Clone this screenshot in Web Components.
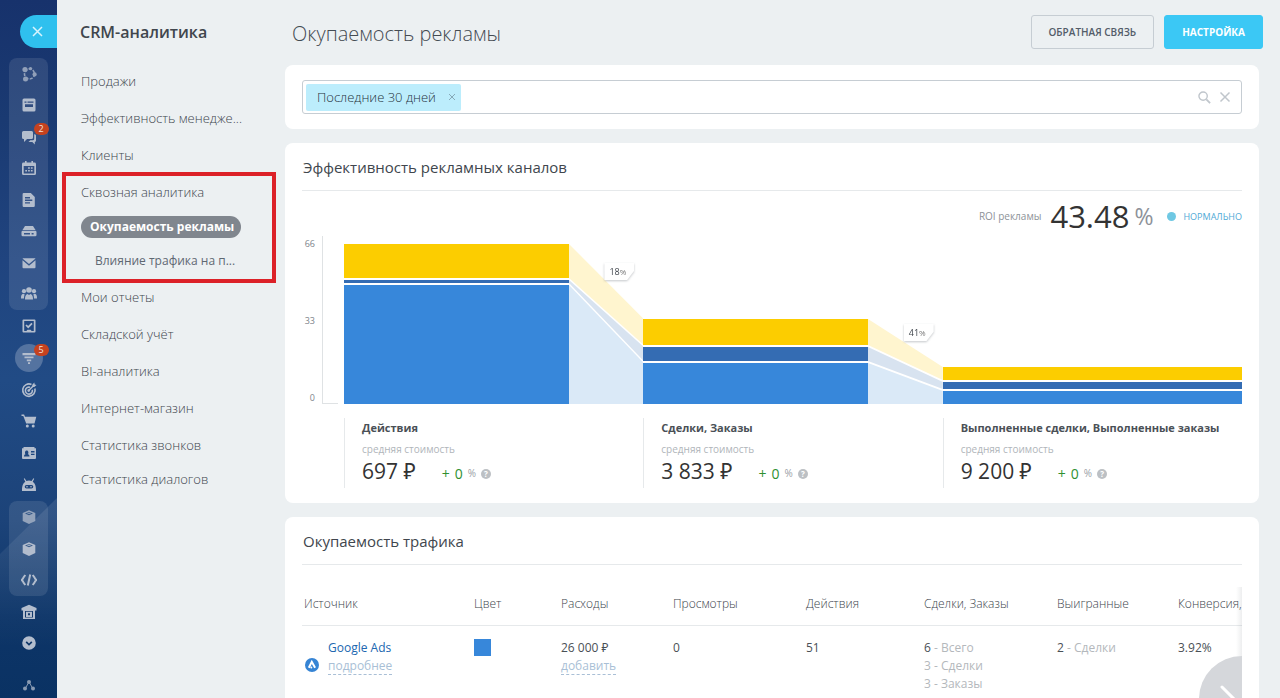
<!DOCTYPE html>
<html lang="ru">
<head>
<meta charset="utf-8">
<meta name="viewport" content="width=device-width, initial-scale=1">
<title>CRM-аналитика</title>
<style>
  html, body { margin: 0; height: 100%; }
  body { font-family: "Open Sans", "Noto Sans", sans-serif; font-size: 13px; color: #535c69; background: #ecf0f2; overflow: hidden; }
</style>
</head>
<body>
<crm-app></crm-app>

<script>
const define = (name, html) => customElements.define(name, class extends HTMLElement {
  connectedCallback() {
    if (this.shadowRoot) return;
    const t = document.createElement('template');
    t.innerHTML = typeof html === 'function' ? html(this) : html;
    this.attachShadow({ mode: 'open' }).append(t.content.cloneNode(true));
  }
});

const ICONS = {
  network: '<g fill="none" stroke="currentColor" stroke-width="1.6" stroke-dasharray="3 1.4"><circle cx="8.500" cy="8" r="5"/></g><circle cx="4" cy="3.600" r="2.600"/><circle cx="9.500" cy="2.600" r="1.700"/><circle cx="13.600" cy="8.400" r="2.100"/><circle cx="4.500" cy="13" r="2.500"/>',
  news: '<path fill-rule="evenodd" d="M3 1.500h10A1.500 1.500 0 0 1 14.500 3v10a1.500 1.500 0 0 1-1.500 1.500H3A1.500 1.500 0 0 1 1.500 13V3A1.500 1.500 0 0 1 3 1.500zm.5 3v1.300h2V4.500zm3 0v1.300h6V4.500zM4 7.300v2.800h8V7.300z"/>',
  chat: '<path d="M2.500 2h8A1.500 1.500 0 0 1 12 3.500v5a1.500 1.500 0 0 1-1.500 1.500H6l-3 3v-3h-.5A1.500 1.500 0 0 1 1 8.500v-5A1.500 1.500 0 0 1 2.500 2z"/><path d="M13.200 5.200h.6A1.400 1.400 0 0 1 15 6.600v5a1.400 1.400 0 0 1-1.200 1.400v2.500L11.300 13H7.500l1.800-1.700h2.500a1.400 1.400 0 0 0 1.400-1.400z"/>',
  calendar: '<path fill-rule="evenodd" d="M4 1h1.600v1.600h4.800V1H12v1.600h1.500A1.500 1.500 0 0 1 15 4v9.500a1.500 1.500 0 0 1-1.500 1.500h-11A1.500 1.500 0 0 1 1 13.500V4a1.500 1.500 0 0 1 1.500-1.400H4zM2.700 6v7.400h10.600V6z"/><path d="M7.100 7.200h1.700v1.500H7.100zm2.800 0h1.700v1.500H9.900zM4.300 10h1.700v1.500H4.300zm2.800 0h1.700v1.500H7.100zm2.800 0h1.700v1.500H9.900z"/>',
  doc: '<path fill-rule="evenodd" d="M2.800 1h7L13.800 5v8.800A1.200 1.200 0 0 1 12.600 15H2.800a1.200 1.200 0 0 1-1.200-1.200V2.200A1.200 1.200 0 0 1 2.800 1zM4 5v1.400h5V5zm0 2.600V9h7.300V7.600zm0 2.600v1.400h5v-1.400z"/>',
  drive: '<path d="M4 3h8l2.500 4H1.500z"/><path fill-rule="evenodd" d="M1.800 7.800h12.400A1.300 1.300 0 0 1 15.500 9v3a1.300 1.300 0 0 1-1.300 1.300H1.800A1.300 1.300 0 0 1 .5 12V9a1.300 1.300 0 0 1 1.300-1.200zM3 10v1.400h6V10zm7.600 0v1.400h2V10z"/>',
  mail: '<path d="M2 3.200h12a.8.8 0 0 1 .5.300L8 9 1.500 3.500a.8.8 0 0 1 .5-.3z"/><path d="M1.500 5.200 8 10.700l6.500-5.500v7a1 1 0 0 1-1 1h-11a1 1 0 0 1-1-1z"/>',
  people: '<circle cx="8" cy="4" r="2.800"/><circle cx="3" cy="5.200" r="2.100"/><circle cx="13" cy="5.200" r="2.100"/><path d="M4 13.500c0-3 .4-4.500 2.500-5.500L8 9l1.500-1c2.100 1 2.500 2.500 2.500 5.500z"/><path d="M0 12.500C0 10 .2 8.500 2 7.800L3.800 8.500C3.200 9.500 3 11 3 12.500zm16 0c0-2.500-.2-4-2-4.700l-1.800.7c.6 1 .8 2.500.8 4z"/>',
  task: '<path fill-rule="evenodd" d="M2.500 1.500h11a1 1 0 0 1 1 1v11a1 1 0 0 1-1 1h-11a1 1 0 0 1-1-1v-11a1 1 0 0 1 1-1zM3.200 3v10h2.200l1-1.300h3.200l1 1.300h2.200V3z"/><path d="m5 7 2.200 2.200L11 5.400" fill="none" stroke="currentColor" stroke-width="1.700"/>',
  funnel: '<path d="M1.500 3h13v2.300h-13zm2 3.500h9v1.800h-9zm2.300 3h4.400v1.700H5.800zM7 12.200h2V14H7z"/>',
  target: '<g fill="none" stroke="currentColor" stroke-width="1.600"><path d="M10.500 2.500a6.200 6.200 0 1 0 3.400 4"/><path d="M9 5.300a3.500 3.500 0 1 0 2.300 2.500"/><path d="m7.700 8.500 5-5"/></g><path d="m11.300 2.800 2-2.200.4 1.800 1.800.5-2.200 2h-2z"/><circle cx="7.700" cy="8.600" r="1.300"/>',
  cart: '<path d="M.5 1.500h2.600l.9 2.300h11.300L13.500 10.500H5.200L2.300 3H.5z"/><circle cx="6.300" cy="13" r="1.500"/><circle cx="12.200" cy="13" r="1.500"/>',
  card: '<path fill-rule="evenodd" d="M2.500 2h11v1.200H15V13a1 1 0 0 1-1 1H2a1 1 0 0 1-1-1V3.200h1.500zM3 11.600h5.500c0-1.500-.5-2-1.600-2.400.8-1 .8-3.700-1.200-3.700s-2 2.700-1.200 3.700C3.400 9.600 3 10.100 3 11.600zM10 6v1.400h3.500V6zm0 2.700v1.400h3.500V8.700z"/>',
  robot: '<path fill-rule="evenodd" d="M3.600 1.200 5.400 4a7 7 0 0 1 5.200 0l1.800-2.800.8.500-1.500 3C14.300 6.500 15 9 15 14H1c0-5 .7-7.500 3.300-9.300l-1.500-3zM5.500 8a1.800 1.800 0 0 0 0 3.600h5a1.800 1.800 0 0 0 0-3.600z"/><circle cx="6" cy="9.800" r=".8"/><circle cx="10" cy="9.800" r=".8"/>',
  box: '<path fill-rule="evenodd" d="M8 1.200 14.300 4v8L8 15 1.700 12V4zM4 4.400 8 6.200l4-1.800L8 2.900z"/><path d="M6.500 3.800h3v1h-3z"/>',
  code: '<g fill="none" stroke="currentColor" stroke-width="2"><path d="M4.300 3 2.500 5.500Q2 7 .5 8 2 9 2.500 10.500L4.300 13M11.700 3l1.800 2.500Q14 7 15.500 8 14 9 13.500 10.500L11.700 13M9.200 2.500l-2.400 11"/></g>',
  market: '<path fill-rule="evenodd" d="M8 .8 15.500 4v2.500H14V15H2V6.500H.5V4zM4 7v6.500h8V7z"/><path fill-rule="evenodd" d="M5 7.800h6V13H5zm2 1.500v2h2v-2z"/>',
  more: '<path fill-rule="evenodd" d="M8 1.200a6.800 6.800 0 1 1 0 13.600A6.800 6.800 0 0 1 8 1.200zM5.800 6.300 4.600 7.500 8 10.800l3.400-3.300-1.200-1.200L8 8.400z"/>',
  sitemap: '<circle cx="8" cy="5" r="2"/><circle cx="4" cy="11.500" r="2"/><circle cx="12" cy="11.500" r="2"/><path d="M8 5 4.500 11M8 5l3.500 6" stroke="currentColor" fill="none"/>'
};

define('rail-item', el => `
<style>
  :host { display: grid; place-items: center; flex: 1; min-height: 0; }
  button { position: relative; display: grid; place-items: center; width: 28px; height: 28px; padding: 0; border: 0; border-radius: 50%; background: none; color: #b3bdcd; font: inherit; }
  :host([active]) button { background: #5473a0; }
  :host([dim]) button { opacity: .75; }
  svg { width: 16px; height: 16px; fill: currentColor; }
  span { position: absolute; top: 0; left: 19px; min-width: 15px; height: 12px; border-radius: 6px; background: #c5421f; color: #f0e2de; font-size: 9px; line-height: 12px; text-align: center; }
</style>
<button type="button" aria-label="${el.getAttribute('icon')}"><svg viewBox="0 0 16 16">${ICONS[el.getAttribute('icon')]}</svg>${el.hasAttribute('badge') ? `<span>${el.getAttribute('badge')}</span>` : ''}</button>`);

define('nav-rail', `
<style>
  :host { position: relative; z-index: 0; display: flex; flex-direction: column; overflow: hidden;
    background: linear-gradient(180deg, #17326c 0, #1a3a72 120px, #20447f 260px, #214b85 380px, #1c4379 520px, #0d3568 620px, #0a3263 100%); }
  :host::before { content: ""; position: absolute; z-index: -1; top: 498px; left: 0; right: 0; height: 150px; clip-path: polygon(0 56px, 100% 0, 100% 100%, 0 100%); background: linear-gradient(rgba(255,255,255,.1), transparent); }
  .close { align-self: flex-end; width: 37px; height: 33px; margin: 15px 0 10px; padding: 0 2px 0 0; border: 0; border-radius: 17px 0 0 17px; background: #2fc0ee; flex: none; display: grid; place-items: center; }
  .close svg { width: 11px; height: 11px; stroke: #d8f4fd; stroke-width: 1.500; }
  .set { display: flex; flex-direction: column; margin: 0 9px; flex: none; }
  .tint { background: rgba(255,255,255,.1); border-radius: 8px; }
  .first { height: 252px; } .second { height: 191px; } .third { height: 95px; } .fourth { height: 63px; } .last { height: 32px; margin-top: 10px; }
</style>
<button class="close" type="button" aria-label="Закрыть"><svg viewBox="0 0 11 11"><path d="m1 1 9 9M10 1l-9 9"/></svg></button>
<div class="set tint first"><rail-item icon="network" dim></rail-item><rail-item icon="news"></rail-item><rail-item icon="chat" badge="2"></rail-item><rail-item icon="calendar"></rail-item><rail-item icon="doc"></rail-item><rail-item icon="drive"></rail-item><rail-item icon="mail"></rail-item><rail-item icon="people"></rail-item></div>
<div class="set second"><rail-item icon="task"></rail-item><rail-item icon="funnel" badge="5" active></rail-item><rail-item icon="target"></rail-item><rail-item icon="cart"></rail-item><rail-item icon="card"></rail-item><rail-item icon="robot"></rail-item></div>
<div class="set tint third"><rail-item icon="box" dim></rail-item><rail-item icon="box"></rail-item><rail-item icon="code"></rail-item></div>
<div class="set fourth"><rail-item icon="market"></rail-item><rail-item icon="more"></rail-item></div>
<div class="set last"><rail-item icon="sitemap" dim></rail-item></div>`);

define('menu-item', `
<style>
  :host { display: flex; align-items: center; height: 37px; padding-left: 24px; }
  :host([sub]) { height: 34px; font-size: 12px; }
  :host([sub]:not([active])) { padding-left: 38px; }
  :host([last]) { height: 31px; }
  a { color: #3d454d; font-weight: 300; text-decoration: none; white-space: nowrap; line-height: 22px; }
  :host([sub]) a { font-weight: 400; color: #5f6872; }
  :host([active]) a { padding: 0 7px 0 9px; border-radius: 11px; background: #80868e; color: #fff; font-weight: 700; }
</style>
<a href="#"><slot></slot></a>`);

define('side-menu', `
<style>
  :host { display: block; }
  h2 { margin: 0; padding: 20px 0 18px 23px; color: #40464d; font-size: 16px; line-height: 24px; font-weight: 600; }
  nav { display: block; }
  .marked { position: relative; }
  .marked::after { content: ""; position: absolute; inset: -1px 9px -5px 5px; border: 4px solid #dc2128; pointer-events: none; }
</style>
<h2>CRM-аналитика</h2>
<nav>
  <menu-item>Продажи</menu-item><menu-item>Эффективность менедже...</menu-item><menu-item>Клиенты</menu-item>
  <div class="marked"><menu-item>Сквозная аналитика</menu-item><menu-item sub active>Окупаемость рекламы</menu-item><menu-item sub>Влияние трафика на п...</menu-item></div>
  <menu-item>Мои отчеты</menu-item><menu-item>Складской учёт</menu-item><menu-item>BI-аналитика</menu-item><menu-item>Интернет-магазин</menu-item><menu-item>Статистика звонков</menu-item><menu-item last>Статистика диалогов</menu-item>
</nav>`);

define('page-header', `
<style>
  :host { display: flex; align-items: flex-start; gap: 10px; padding: 15px 17px 12px 7px; }
  h1 { flex: 1; margin: 0; font-size: 20px; line-height: 38px; font-weight: 300; color: #444b52; }
  button { height: 34px; padding: 0 17px; border: 1px solid #c6cdd3; border-radius: 3px; background: none; color: #535c69; font: 600 10px/32px "Open Sans", "Noto Sans", sans-serif; }
  .primary { border-color: #3bc8f5; background: #3bc8f5; color: #fff; font-weight: 700; }
</style>
<h1>Окупаемость рекламы</h1>
<button type="button">ОБРАТНАЯ СВЯЗЬ</button>
<button type="button" class="primary">НАСТРОЙКА</button>`);

define('filter-bar', `
<style>
  :host { display: block; margin-right: 21px; padding: 15px 17px; border-radius: 8px; background: #fff; }
  .field { display: flex; align-items: center; height: 32px; padding: 0 10px 0 3px; border: 1px solid #c6cdd3; border-radius: 3px; }
  .tag { display: flex; align-items: center; gap: 12px; height: 27px; padding: 0 5px 0 11px; background: #bcedfc; border-radius: 2px; color: #26343c; font-weight: 300; }
  button { display: grid; padding: 0; border: 0; background: none; }
  svg { display: block; fill: none; stroke: #c0c6cc; stroke-width: 1.500; }
  .tag svg { width: 8px; height: 8px; stroke: #86a9b8; stroke-width: 1; }
  input { flex: 1; min-width: 0; border: 0; outline: 0; background: none; font: inherit; }
  .tools { display: flex; gap: 8px; align-items: center; }
</style>
<div class="field">
  <span class="tag">Последние 30 дней<button type="button" aria-label="Убрать фильтр"><svg viewBox="0 0 8 8"><path d="m1 1 6 6M7 1 1 7"/></svg></button></span>
  <input type="text" aria-label="Поиск">
  <div class="tools">
    <button type="button" aria-label="Найти"><svg width="13" height="13" viewBox="0 0 14 14"><circle cx="5.500" cy="5.500" r="4.500"/><path d="m9 9 4 4" stroke-width="2"/></svg></button>
    <button type="button" aria-label="Сбросить"><svg width="12" height="12" viewBox="0 0 12 12"><path d="m1.500 1.500 9 9M10.500 1.500l-9 9"/></svg></button>
  </div>
</div>`);

define('report-card', el => `
<style>
  :host { display: block; margin: 14px 21px 0 0; padding: 0 17px; border-radius: 8px; background: #fff; }
  h3 { margin: 0; padding: 12px 1px 11px; border-bottom: 1px solid #e6e9eb; font-size: 15px; line-height: 24px; font-weight: 400; color: #40464d; }
</style>
<h3>${el.getAttribute('heading')}</h3><slot></slot>`);

define('roi-summary', `
<style>
  :host { display: flex; justify-content: flex-end; align-items: center; height: 45px; padding-top: 5px; box-sizing: border-box; color: #8d9299; font-size: 10px; }
  b { margin: 0 5px 0 9px; font-size: 31px; line-height: 40px; font-weight: 400; color: #333; }
  .pct { font-size: 23px; }
  i { width: 9px; height: 9px; margin: 0 7px 0 14px; border-radius: 50%; background: #6fc8e3; }
  .state { font-size: 9px; color: #4fa9d6; }
</style>
<span>ROI рекламы</span><b>43.48</b><span class="pct">%</span><i></i><span class="state">НОРМАЛЬНО</span>`);

define('funnel-stage', el => {
  const h = el.getAttribute('sizes').split(',');
  const shapes = el.getAttribute('links');
  const cols = ['#fff5cf', '#d8e3f0', '#dae9f7'];
  return `
<style>
  :host { display: flex; align-items: flex-end; height: 168px; }
  .bar { flex: 3; display: flex; flex-direction: column; gap: 2px; }
  .a { height: ${h[0]}px; background: #fccd00; } .b { height: ${h[1]}px; background: #346cb3; } .c { height: ${h[2]}px; background: #3787da; }
  .link { flex: 1; position: relative; height: 160px; }
  .link svg { display: block; width: 100%; height: 100%; }
  .tag { position: absolute; left: 48%; top: ${el.getAttribute('tag-top')}px; filter: drop-shadow(0 1px 1px rgba(60,70,80,.3)); }
  .tag span { display: block; padding: 0 8px 0 5px; background: #fff; clip-path: polygon(0 0, 100% 0, 100% 45%, 76% 100%, 0 100%); font-size: 9px; line-height: 17px; color: #40464d; }
  .tag small { font-size: 8px; color: #777; }
</style>
<div class="bar"><div class="a"></div><div class="b"></div><div class="c"></div></div>
${shapes ? `<div class="link"><svg viewBox="0 0 75 160" preserveAspectRatio="none">${shapes.split(';').map((p, i) => `<polygon points="${p}" fill="${cols[i]}"/>`).join('')}</svg>
<div class="tag"><span>${el.getAttribute('share')}<small>%</small></span></div></div>` : ''}`;
});

define('funnel-stat', el => `
<style>
  :host { display: block; height: 70px; padding-left: 17px; border-left: 1px solid #e6e9eb; box-sizing: border-box; }
  h4 { margin: 0; font-size: 11px; line-height: 19px; font-weight: 700; color: #4a5056; white-space: nowrap; }
  p { margin: 0; padding-top: 3px; font-size: 10px; line-height: 18px; color: #b0b5ba; }
  .row { display: flex; align-items: center; line-height: 26px; }
  .value { margin-right: 26px; font-size: 21px; font-weight: 400; color: #333; white-space: nowrap; }
  .delta { display: flex; align-items: center; gap: 5px; padding-top: 5px; color: #2f9031; font-size: 14px; line-height: 21px; }
  small { font-size: 10px; color: #9aa0a6; }
  button { display: grid; place-items: center; width: 10px; height: 10px; padding: 0; border: 0; border-radius: 50%; background: #bcc0c4; color: #fff; font: 700 8px/10px "Open Sans", sans-serif; }
</style>
<h4>${el.getAttribute('heading')}</h4><p>средняя стоимость</p>
<div class="row"><span class="value">${el.getAttribute('value')} ₽</span><span class="delta"><span>+</span><span>0</span><small>%</small><button type="button">?</button></span></div>`);

define('funnel-chart', `
<style>
  :host { display: grid; grid-template-columns: 42px 1fr; padding-bottom: 15px; }
  .axis { display: flex; height: 168px; }
  .labels { width: 13px; display: flex; flex-direction: column; justify-content: space-between; padding: 2px 0 0; box-sizing: border-box; text-align: right; font-size: 9px; line-height: 12px; color: #7d848b; }
  .line { width: 15px; margin-left: 7px; border: solid #dfe2e4; border-width: 0 0 1px 1px; }
  .stages, .stats { display: grid; grid-template-columns: repeat(3, 1fr); }
  .stats { grid-column: 2; margin-top: 14px; }
</style>
<div class="axis"><div class="labels"><span>66</span><span>33</span><span>0</span></div><div class="line"></div></div>
<div class="stages">
  <funnel-stage sizes="34,3,119" share="18" tag-top="19" links="0,0 75,75 75,101 0,34;0,36 75,103 75,117 0,39;0,41 75,119 75,160 0,160"></funnel-stage>
  <funnel-stage sizes="26,14,41" share="41" tag-top="80" links="0,75 75,123 75,136 0,101;0,103 75,138 75,145 0,117;0,119 75,147 75,160 0,160"></funnel-stage>
  <funnel-stage sizes="13,7,13" links=""></funnel-stage>
</div>
<div class="stats">
  <funnel-stat heading="Действия" value="697"></funnel-stat>
  <funnel-stat heading="Сделки, Заказы" value="3 833"></funnel-stat>
  <funnel-stat heading="Выполненные сделки, Выполненные заказы" value="9 200"></funnel-stat>
</div>`);

define('traffic-table', `
<style>
  :host { display: block; position: relative; overflow: hidden; }
  table { width: 100%; min-width: 1030px; table-layout: fixed; border-collapse: collapse; font-size: 12px; line-height: 18px; }
  th { padding: 30px 0 12px 2px; border-bottom: 1px solid #e6e9eb; text-align: left; font-weight: 300; color: #3d454d; white-space: nowrap; }
  td { padding: 13px 0 24px 2px; vertical-align: top; color: #4a5056; white-space: nowrap; }
  .muted { color: #b4b8bc; }
  .source { display: flex; align-items: center; gap: 9px; padding-left: 1px; }
  .source svg { width: 14px; height: 14px; margin-top: 16px; }
  a { color: #2067b0; text-decoration: none; }
  .more { display: inline-block; line-height: 16px; color: #a9bfd6; border-bottom: 1px dashed #a9bfd6; }
  .swatch { width: 17px; height: 17px; background: #3787da; }
  .fade { position: absolute; top: 22px; right: 0; bottom: 0; width: 6px; background: linear-gradient(90deg, transparent, rgba(80,90,100,.1)); }
  .next { position: absolute; top: 91px; right: -43px; width: 86px; height: 86px; padding: 0; border: 0; border-radius: 50%; background: #d5d7db; }
  .next svg { position: absolute; left: 21px; top: 29px; width: 16px; height: 28px; fill: none; stroke: #fff; stroke-width: 3; stroke-linecap: round; }
</style>
<table>
  <colgroup><col style="width:170px"><col style="width:87px"><col style="width:112px"><col style="width:133px"><col style="width:118px"><col style="width:133px"><col style="width:121px"><col></colgroup>
  <thead><tr><th>Источник</th><th>Цвет</th><th>Расходы</th><th>Просмотры</th><th>Действия</th><th>Сделки, Заказы</th><th>Выигранные</th><th>Конверсия,</th></tr></thead>
  <tbody><tr>
    <td><div class="source"><svg viewBox="0 0 14 14"><circle cx="7" cy="7" r="7" fill="#3684d4"/><path d="m3.800 9.800 3-6 3.300 6" fill="none" stroke="#fff" stroke-width="2"/><circle cx="6.300" cy="9.600" r="1" fill="#fff"/></svg><div><a href="#">Google Ads</a><br><a href="#" class="more">подробнее</a></div></div></td>
    <td><div class="swatch"></div></td>
    <td>26 000 ₽<br><a href="#" class="more">добавить</a></td>
    <td>0</td><td>51</td>
    <td>6 <span class="muted">- Всего<br>3 - Сделки<br>3 - Заказы</span></td>
    <td>2 <span class="muted">- Сделки</span></td>
    <td>3.92%</td>
  </tr></tbody>
</table>
<div class="fade"></div>
<button class="next" type="button" aria-label="Прокрутить вправо"><svg viewBox="0 0 16 28"><path d="m2 2 12 12L2 26"/></svg></button>`);

define('crm-app', `
<style>
  :host { display: grid; grid-template-columns: 57px 228px minmax(0, 1fr); height: 100vh; overflow: hidden; }
  main { min-width: 0; overflow: hidden; }
</style>
<nav-rail></nav-rail>
<side-menu></side-menu>
<main>
  <page-header></page-header>
  <filter-bar></filter-bar>
  <report-card heading="Эффективность рекламных каналов"><roi-summary></roi-summary><funnel-chart></funnel-chart></report-card>
  <report-card heading="Окупаемость трафика"><traffic-table></traffic-table></report-card>
</main>`);
</script>
</body>
</html>
